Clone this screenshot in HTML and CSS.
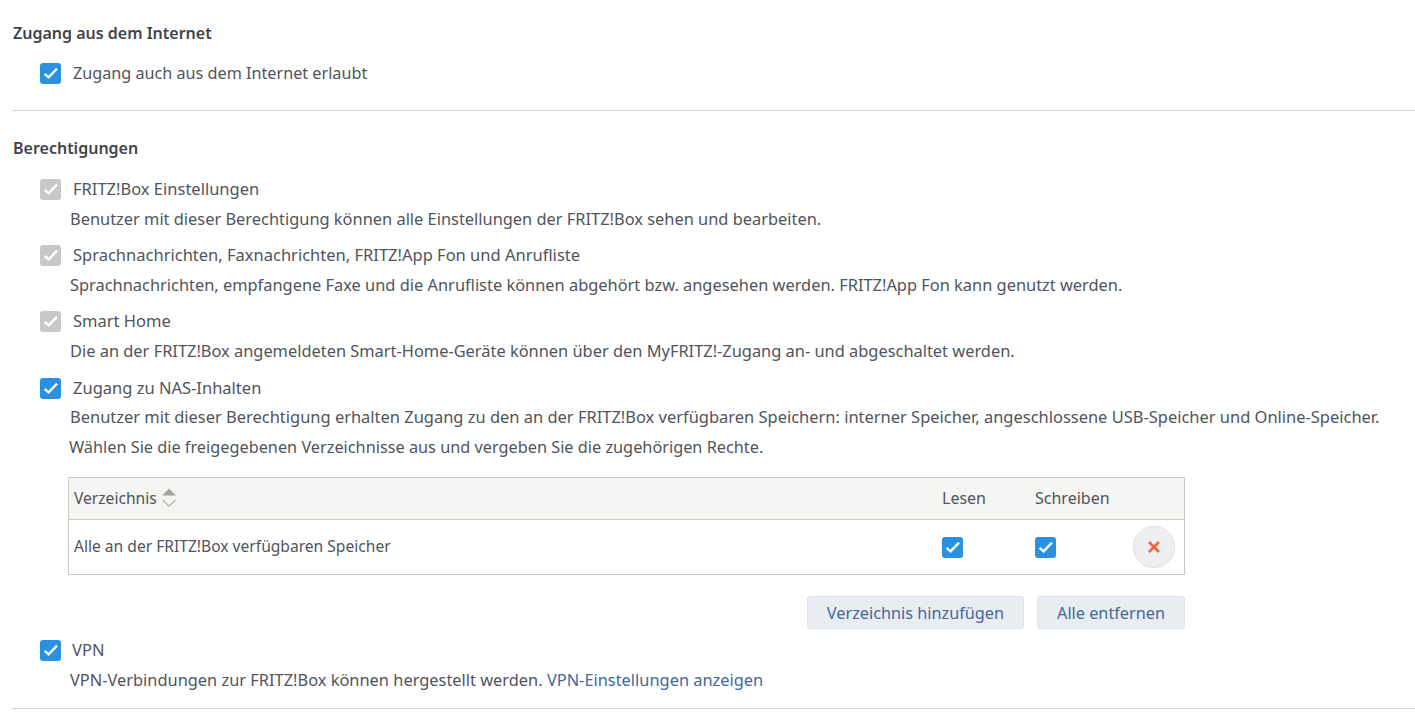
FILE: index.html
```html
<!DOCTYPE html>
<html lang="de">
<head>
    <meta charset="UTF-8">
    <title>Zugang aus dem Internet</title>
    <link rel="stylesheet" href="styles.css">
</head>
<body>
<svg class="defs" width="0" height="0">
    <symbol id="tick" viewBox="0 0 21 21">
        <path d="M4.6 10.8l4 3.6L17 5.6" fill="none" stroke="#fff" stroke-width="2.3"/>
    </symbol>
</svg>
<section class="group internet">
    <h2>Zugang aus dem Internet</h2>
    <div class="check-row">
        <span class="box"><svg><use href="#tick"/></svg></span>
        <label>Zugang auch aus dem Internet erlaubt</label>
    </div>
</section>
<section class="group rights">
    <h2>Berechtigungen</h2>
    <div class="right">
        <div class="check-row">
            <span class="box off"><svg><use href="#tick"/></svg></span>
            <label>FRITZ!Box Einstellungen</label>
        </div>
        <p>Benutzer mit dieser Berechtigung können alle Einstellungen der FRITZ!Box sehen und bearbeiten.</p>
    </div>
    <div class="right">
        <div class="check-row">
            <span class="box off"><svg><use href="#tick"/></svg></span>
            <label>Sprachnachrichten, Faxnachrichten, FRITZ!App Fon und Anrufliste</label>
        </div>
        <p>Sprachnachrichten, empfangene Faxe und die Anrufliste können abgehört bzw. angesehen werden. FRITZ!App Fon kann genutzt werden.</p>
    </div>
    <div class="right">
        <div class="check-row">
            <span class="box off"><svg><use href="#tick"/></svg></span>
            <label>Smart Home</label>
        </div>
        <p>Die an der FRITZ!Box angemeldeten Smart-Home-Geräte können über den MyFRITZ!-Zugang an- und abgeschaltet werden.</p>
    </div>
    <div class="right nas">
        <div class="check-row">
            <span class="box"><svg><use href="#tick"/></svg></span>
            <label>Zugang zu NAS-Inhalten</label>
        </div>
        <p>Benutzer mit dieser Berechtigung erhalten Zugang zu den an der FRITZ!Box verfügbaren Speichern: interner Speicher, angeschlossene USB-Speicher und Online-Speicher.</p>
        <p class="hint">Wählen Sie die freigegebenen Verzeichnisse aus und vergeben Sie die zugehörigen Rechte.</p>
        <div class="dirs">
            <div class="dirs-row dirs-head">
                <div class="col-name">Verzeichnis
                    <svg class="sort" width="16" height="20" viewBox="0 0 16 20">
                        <path d="M8 .5l7 7H1z" fill="#a3a3a0"/>
                        <path d="M1.5 12L8 18l6.5-6" fill="none" stroke="#b4b4b0" stroke-width="1.3"/>
                    </svg>
                </div>
                <div class="col-read">Lesen</div>
                <div class="col-write">Schreiben</div>
            </div>
            <div class="dirs-row dirs-body">
                <div class="col-name">Alle an der FRITZ!Box verfügbaren Speicher</div>
                <div class="col-read"><span class="box"><svg><use href="#tick"/></svg></span></div>
                <div class="col-write"><span class="box"><svg><use href="#tick"/></svg></span></div>
                <button class="remove">
                    <svg width="14" height="14" viewBox="0 0 14 14">
                        <path d="M2 2l10 10M12 2L2 12" stroke="#f4623a" stroke-width="2.8"/>
                    </svg>
                </button>
            </div>
        </div>
        <div class="dir-actions">
            <button class="btn">Verzeichnis hinzufügen</button>
            <button class="btn">Alle entfernen</button>
        </div>
    </div>
    <div class="right vpn">
        <div class="check-row">
            <span class="box"><svg><use href="#tick"/></svg></span>
            <label>VPN</label>
        </div>
        <p>VPN-Verbindungen zur FRITZ!Box können hergestellt werden. <a href="#">VPN-Einstellungen anzeigen</a></p>
    </div>
</section>
</body>
</html>
```
FILE: styles.css
```css
body {
    margin: 0;
    padding-left: 12px;
    height: 722px;
    overflow: hidden;
    background: #fff;
    color: #50545c;
    font-family: "Noto Sans", sans-serif;
    font-size: 16.5px;
    line-height: 24px;
}

.defs {
    position: absolute;
}

h2 {
    margin: 0 0 0 1px;
    font-size: 16px;
    line-height: 24px;
    font-weight: 600;
    color: #3f444c;
}

.group {
    border-bottom: 1px solid #d6d6d6;
}

.internet {
    padding: 21px 0 25px;
}

.rights {
    padding: 25px 0 16px;
}

.check-row {
    display: flex;
    align-items: center;
    height: 24px;
    margin-left: 28px;
}

.check-row label {
    margin-left: 12px;
}

.internet .check-row {
    margin-top: 16px;
    font-size: 16.2px;
}

.box {
    display: block;
    width: 21px;
    height: 21px;
    border-radius: 3px;
    background: #2a90e0;
    flex: none;
}

.box svg {
    display: block;
    width: 21px;
    height: 21px;
}

.box.off {
    background: #c8c8c8;
}

.right {
    margin-top: 12px;
}

h2 + .right {
    margin-top: 17px;
}

.right.nas {
    margin-top: 13px;
}

.right.vpn {
    margin-top: 9px;
}

.vpn label {
    margin-left: 11px;
}

.right p {
    margin: 6px 0 0 58px;
    font-size: 16.4px;
}

.right.nas p {
    margin-top: 5px;
    font-size: 16.47px;
}

.right.nas p.hint {
    margin: 6px 0 0 57px;
    font-size: 16.3px;
}

.dirs {
    width: 1117px;
    height: 98px;
    margin: 18px 0 0 56px;
    border: 1px solid #c9c8c1;
    box-sizing: border-box;
    font-size: 15.6px;
}

.dirs-row {
    display: flex;
    align-items: center;
    padding-left: 5px;
}

.dirs-head {
    height: 42px;
    box-sizing: border-box;
    padding-bottom: 2px;
    background: #f5f5f3;
    border-bottom: 1px solid #c9c8c1;
    font-size: 16px;
}

.dirs-head .col-name {
    font-size: 15.6px;
}

.dirs-body {
    height: 54px;
}

.dirs-body .col-name {
    padding-bottom: 3px;
}

.col-name {
    width: 868px;
    display: flex;
    align-items: center;
    gap: 4px;
}

.col-read {
    width: 93px;
}

.col-write {
    width: 98px;
}

.sort {
    display: block;
}

.remove {
    width: 42px;
    height: 42px;
    padding: 0;
    border: 1px solid #dedfe1;
    border-radius: 50%;
    background: #eeeff1;
    display: flex;
    align-items: center;
    justify-content: center;
}

.dir-actions {
    width: 1117px;
    margin: 21px 0 0 56px;
    display: flex;
    justify-content: flex-end;
    gap: 13px;
}

.btn {
    height: 33px;
    padding: 0 19px;
    border: 1px solid #dfe3e8;
    border-radius: 3px;
    background: #e9edf1;
    color: #44679c;
    font-family: inherit;
    font-size: 16.25px;
}

a {
    color: #44679c;
    text-decoration: none;
}
```
